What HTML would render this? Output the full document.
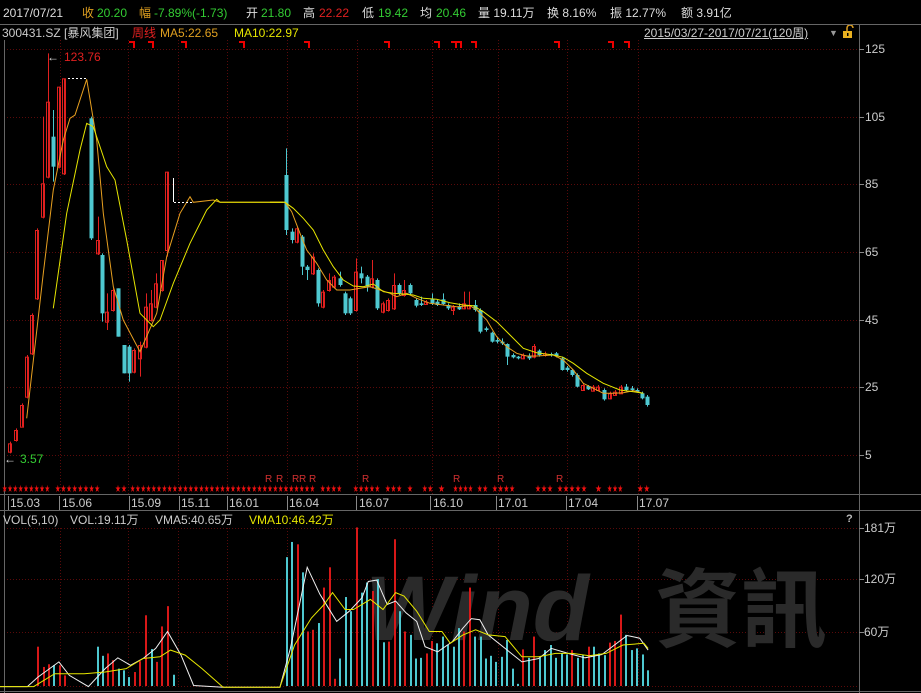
<!DOCTYPE html>
<html><head><meta charset="utf-8">
<style>
html,body{margin:0;padding:0;background:#000;}
body{width:921px;height:693px;overflow:hidden;position:relative;font-family:"Liberation Sans","Noto Sans CJK SC",sans-serif;font-size:12px;}
.t{position:absolute;white-space:nowrap;line-height:14px;}
</style></head><body>
<svg id="s" width="921" height="693" style="position:absolute;left:0;top:0" xmlns="http://www.w3.org/2000/svg">
<g stroke="#5a0a0a" stroke-dasharray="1,2" stroke-width="1">
<line x1="4" y1="49.5" x2="858" y2="49.5"/><line x1="4" y1="117.5" x2="858" y2="117.5"/><line x1="4" y1="184.5" x2="858" y2="184.5"/><line x1="4" y1="252.5" x2="858" y2="252.5"/><line x1="4" y1="320.5" x2="858" y2="320.5"/><line x1="4" y1="387.5" x2="858" y2="387.5"/><line x1="4" y1="455.5" x2="858" y2="455.5"/>
<line x1="60.5" y1="40" x2="60.5" y2="494"/><line x1="128.5" y1="40" x2="128.5" y2="494"/><line x1="178.5" y1="40" x2="178.5" y2="494"/><line x1="227.5" y1="40" x2="227.5" y2="494"/><line x1="287.5" y1="40" x2="287.5" y2="494"/><line x1="357.5" y1="40" x2="357.5" y2="494"/><line x1="432.5" y1="40" x2="432.5" y2="494"/><line x1="498.5" y1="40" x2="498.5" y2="494"/><line x1="567.5" y1="40" x2="567.5" y2="494"/><line x1="638.5" y1="40" x2="638.5" y2="494"/>
<line x1="4" y1="528.5" x2="858" y2="528.5"/><line x1="4" y1="579.5" x2="858" y2="579.5"/><line x1="4" y1="632.5" x2="858" y2="632.5"/>
<line x1="60.5" y1="528" x2="60.5" y2="686"/><line x1="128.5" y1="528" x2="128.5" y2="686"/><line x1="178.5" y1="528" x2="178.5" y2="686"/><line x1="227.5" y1="528" x2="227.5" y2="686"/><line x1="287.5" y1="528" x2="287.5" y2="686"/><line x1="357.5" y1="528" x2="357.5" y2="686"/><line x1="432.5" y1="528" x2="432.5" y2="686"/><line x1="498.5" y1="528" x2="498.5" y2="686"/><line x1="567.5" y1="528" x2="567.5" y2="686"/><line x1="638.5" y1="528" x2="638.5" y2="686"/>
<line x1="4" y1="686.5" x2="858" y2="686.5"/>
</g>
<g stroke="#666" stroke-width="1" fill="none">
<line x1="0" y1="24.5" x2="921" y2="24.5"/>
<line x1="859.5" y1="24" x2="859.5" y2="693"/>
<line x1="4.5" y1="40" x2="4.5" y2="693"/>
<line x1="0" y1="494.5" x2="921" y2="494.5"/>
<line x1="0" y1="510.5" x2="921" y2="510.5"/>
<line x1="0" y1="691.5" x2="921" y2="691.5"/>
</g>
<g stroke="#888" stroke-width="1">
<line x1="8.5" y1="496" x2="8.5" y2="510"/><line x1="59.5" y1="496" x2="59.5" y2="510"/><line x1="129.5" y1="496" x2="129.5" y2="510"/><line x1="179.5" y1="496" x2="179.5" y2="510"/><line x1="227.5" y1="496" x2="227.5" y2="510"/><line x1="287.5" y1="496" x2="287.5" y2="510"/><line x1="356.5" y1="496" x2="356.5" y2="510"/><line x1="430.5" y1="496" x2="430.5" y2="510"/><line x1="496.5" y1="496" x2="496.5" y2="510"/><line x1="566.5" y1="496" x2="566.5" y2="510"/><line x1="637.5" y1="496" x2="637.5" y2="510"/>
<line x1="859" y1="49.5" x2="864" y2="49.5"/><line x1="859" y1="117.5" x2="864" y2="117.5"/><line x1="859" y1="184.5" x2="864" y2="184.5"/><line x1="859" y1="252.5" x2="864" y2="252.5"/><line x1="859" y1="320.5" x2="864" y2="320.5"/><line x1="859" y1="387.5" x2="864" y2="387.5"/><line x1="859" y1="455.5" x2="864" y2="455.5"/>
<line x1="859" y1="528.5" x2="864" y2="528.5"/><line x1="859" y1="579.5" x2="864" y2="579.5"/><line x1="859" y1="632.5" x2="864" y2="632.5"/>
</g>
<g font-family="Liberation Sans, Noto Sans CJK SC, sans-serif" font-weight="bold" fill="#2a2a2a">
<text x="365" y="640" font-size="92" font-style="italic">Wind</text>
<text x="655" y="640" font-size="86">資訊</text>
</g>
<g id="red-marks" stroke="#e00" stroke-width="2" fill="none"></g>
<g id="vol"></g>
<g id="cdl"></g>
<g id="ma" fill="none" stroke-width="1"></g>
<g stroke="#fff" stroke-width="1" fill="none">
<line x1="173.5" y1="178" x2="173.5" y2="202"/>
<line x1="174" y1="202.5" x2="193" y2="202.5" stroke-dasharray="2,2"/>
<line x1="68" y1="78.5" x2="87" y2="78.5" stroke-dasharray="2,2"/>
</g>
<g id="stars" fill="#f01010" font-family="DejaVu Sans, sans-serif" font-size="10"></g>
<g fill="#d03030" font-family="Liberation Sans, sans-serif" font-size="10">
<text x="265" y="482">R</text><text x="276" y="482">R</text><text x="292" y="482">R</text><text x="299" y="482">R</text><text x="309" y="482">R</text><text x="362" y="482">R</text><text x="453" y="482">R</text><text x="497" y="482">R</text><text x="556" y="482">R</text>
</g>
</svg>

<div class="t" style="left:3px;top:6px;color:#ddd">2017/07/21</div>
<div class="t" style="left:82px;top:6px;color:#e0a020">收</div><div class="t" style="left:97px;top:6px;color:#3c3">20.20</div>
<div class="t" style="left:139px;top:6px;color:#e0a020">幅</div><div class="t" style="left:154px;top:6px;color:#3c3">-7.89%(-1.73)</div>
<div class="t" style="left:246px;top:6px;color:#ddd">开</div><div class="t" style="left:261px;top:6px;color:#3c3">21.80</div>
<div class="t" style="left:303px;top:6px;color:#ddd">高</div><div class="t" style="left:319px;top:6px;color:#e02020">22.22</div>
<div class="t" style="left:362px;top:6px;color:#ddd">低</div><div class="t" style="left:378px;top:6px;color:#3c3">19.42</div>
<div class="t" style="left:420px;top:6px;color:#ddd">均</div><div class="t" style="left:436px;top:6px;color:#3c3">20.46</div>
<div class="t" style="left:478px;top:6px;color:#ddd">量 19.11万</div>
<div class="t" style="left:547px;top:6px;color:#ddd">换 8.16%</div>
<div class="t" style="left:610px;top:6px;color:#ddd">振 12.77%</div>
<div class="t" style="left:681px;top:6px;color:#ddd">额 3.91亿</div>

<div class="t" style="left:2px;top:26px;color:#ccc">300431.SZ [暴风集团]</div>
<div class="t" style="left:132px;top:26px;color:#e02020">周线</div>
<div class="t" style="left:160px;top:26px;color:#e0a020">MA5:22.65</div>
<div class="t" style="left:234px;top:26px;color:#e6e600">MA10:22.97</div>
<div class="t" style="left:644px;top:26px;color:#ccc;text-decoration:underline">2015/03/27-2017/07/21(120周)</div>
<div class="t" style="left:829px;top:26px;color:#999;font-size:9px">▼</div>
<svg style="position:absolute;left:842px;top:25px" width="14" height="14"><path d="M5 6 V3 a3 3 0 0 1 6 0" stroke="#e0a020" stroke-width="1.5" fill="none"/><rect x="1" y="6" width="9" height="7" fill="#e8b020"/><rect x="5" y="8" width="1.5" height="3" fill="#000"/></svg>

<div class="t" style="left:47px;top:50px;color:#ddd">←</div><div class="t" style="left:64px;top:50px;color:#e02020">123.76</div>
<div class="t" style="left:4px;top:452px;color:#ddd">←</div><div class="t" style="left:20px;top:452px;color:#3c3">3.57</div>

<div class="t" style="left:865px;top:42px;color:#ccc">125</div>
<div class="t" style="left:865px;top:110px;color:#ccc">105</div>
<div class="t" style="left:865px;top:177px;color:#ccc">85</div>
<div class="t" style="left:865px;top:245px;color:#ccc">65</div>
<div class="t" style="left:865px;top:313px;color:#ccc">45</div>
<div class="t" style="left:865px;top:380px;color:#ccc">25</div>
<div class="t" style="left:865px;top:448px;color:#ccc">5</div>

<div class="t" style="left:10px;top:496px;color:#ccc">15.03</div>
<div class="t" style="left:62px;top:496px;color:#ccc">15.06</div>
<div class="t" style="left:131px;top:496px;color:#ccc">15.09</div>
<div class="t" style="left:181px;top:496px;color:#ccc">15.11</div>
<div class="t" style="left:229px;top:496px;color:#ccc">16.01</div>
<div class="t" style="left:289px;top:496px;color:#ccc">16.04</div>
<div class="t" style="left:359px;top:496px;color:#ccc">16.07</div>
<div class="t" style="left:433px;top:496px;color:#ccc">16.10</div>
<div class="t" style="left:498px;top:496px;color:#ccc">17.01</div>
<div class="t" style="left:568px;top:496px;color:#ccc">17.04</div>
<div class="t" style="left:639px;top:496px;color:#ccc">17.07</div>

<div class="t" style="left:3px;top:513px;color:#ccc">VOL(5,10)</div>
<div class="t" style="left:70px;top:513px;color:#ccc">VOL:19.11万</div>
<div class="t" style="left:155px;top:513px;color:#ccc">VMA5:40.65万</div>
<div class="t" style="left:249px;top:513px;color:#e6e600">VMA10:46.42万</div>
<div class="t" style="left:846px;top:512px;color:#bbb;font-weight:bold;font-size:11px">?</div>
<div class="t" style="left:864px;top:521px;color:#ccc">181万</div>
<div class="t" style="left:864px;top:572px;color:#ccc">120万</div>
<div class="t" style="left:864px;top:625px;color:#ccc">60万</div>

<script>
var NS="http://www.w3.org/2000/svg";
function el(p,t,a){var e=document.createElementNS(NS,t);for(var k in a)e.setAttribute(k,a[k]);p.appendChild(e);return e;}
var R="#e0201f",C="#4ec8d0";
var cd=document.getElementById("cdl");
function candle(x,bt,bb,wt,wb,c){var col=c=="r"?R:C;
 el(cd,"line",{x1:x+0.5,x2:x+0.5,y1:wt,y2:wb,stroke:col,"stroke-width":1});
 var h=Math.max(1,bb-bt);
 if(c=="r"){el(cd,"rect",{x:x-1.5,y:bt+0.5,width:3,height:h,fill:"none",stroke:col,"stroke-width":1});}
 else el(cd,"rect",{x:x-1.5,y:bt,width:4,height:h,fill:col});}
var A=[[30,1210,1235,1205,1240,"r"],[48,1170,1200,1165,1205,"r"],[65,1095,1160,1090,1160,"r"],[80,950,1070,945,1075,"r"],[97,825,940,820,945,"r"],[112,570,775,565,780,"r"],[130,430,530,230,535,"r"],[145,185,410,40,415,"r"],[160,290,380,210,425,"c"],[178,140,380,140,385,"r"],[193,115,400,115,405,"r"],[273,235,595,230,600,"c"],[293,600,640,530,645,"r"],[307,645,820,640,845,"c"],[322,815,845,760,870,"r"],[340,750,810,745,815,"r"],[355,745,890,745,890,"c"],[373,915,1000,915,1000,"c"],[388,920,1000,915,1025,"c"],[403,930,995,925,1000,"r"],[420,915,955,905,1010,"r"],[437,800,920,760,925,"r"],[452,790,840,750,845,"r"],[468,730,800,700,805,"r"],[485,660,750,660,755,"r"],[502,395,630,395,650,"r"]];
A.forEach(function(d){candle(Math.round(d[0]/3),40+d[1]/3,40+d[2]/3,40+d[3]/3,40+d[4]/3,d[5]);});
var B=[[48,105,270,25,285,"c"],[65,275,300,265,310,"c"],[80,265,305,260,310,"r"],[97,290,380,285,405,"c"],[112,380,390,375,420,"c"],[130,350,400,340,405,"r"],[145,390,490,385,500,"c"],[160,455,500,450,505,"r"],[178,420,450,400,455,"r"],[193,410,440,405,445,"r"],[210,415,435,395,440,"c"],[225,460,520,455,525,"c"],[240,475,520,470,525,"c"],[258,395,510,355,515,"r"],[273,400,415,380,430,"c"],[290,410,440,405,455,"c"],[307,415,440,360,445,"r"],[322,420,505,415,510,"c"],[340,490,515,485,520,"r"],[355,480,510,475,515,"r"],[373,435,505,400,510,"r"],[388,435,460,430,465,"c"],[403,450,465,420,470,"r"],[420,435,460,430,465,"c"],[437,480,497,475,502,"c"],[452,490,495,470,498,"c"],[468,485,492,480,495,"r"],[485,478,490,460,495,"c"],[502,485,495,480,498,"c"],[518,478,492,460,495,"c"],[535,495,505,490,510,"c"],[550,500,510,495,525,"r"],[567,500,508,490,510,"c"],[583,490,505,455,508,"r"],[598,495,505,455,508,"r"],[615,495,510,480,515,"c"],[630,510,575,505,580,"c"],[647,565,570,560,575,"c"],[665,578,605,575,608,"c"],[680,600,605,590,610,"c"],[697,605,610,595,615,"c"],[712,612,650,610,675,"c"],[728,645,652,640,655,"c"],[745,650,655,648,658,"c"],[760,645,655,640,658,"r"],[778,648,655,640,660,"c"],[793,618,650,612,655,"r"],[808,632,645,628,650,"c"],[825,640,645,635,650,"r"],[842,642,645,638,650,"c"],[858,640,648,636,652,"c"],[875,655,690,650,692,"c"],[890,683,690,678,695,"c"],[905,690,705,688,710,"c"],[922,705,740,700,742,"c"],[940,735,750,730,752,"r"],[955,738,748,735,750,"c"],[970,740,752,735,755,"r"],[985,740,750,735,752,"r"],[1003,750,778,745,782,"c"],[1020,760,775,755,778,"r"],[1035,755,765,750,768,"r"],[1053,740,760,735,762,"r"],[1068,740,750,732,752,"c"],[1085,745,750,738,752,"c"],[1100,750,755,745,758,"c"],[1115,760,775,755,778,"c"],[1130,770,795,765,800,"c"]];
B.forEach(function(d){candle(Math.round(270+d[0]/3),140+d[1]/3,140+d[2]/3,140+d[3]/3,140+d[4]/3,d[5]);});
var ma=document.getElementById("ma");
function pl(pts,fx,fy,col){var s=[];for(var i=0;i<pts.length;i+=2)s.push(fx(pts[i])+","+fy(pts[i+1]));el(ma,"polyline",{points:s.join(" "),stroke:col,fill:"none","stroke-width":1});}
var a5=[80,1135,130,700,160,450,190,300,210,235,225,225,260,118,290,300,310,520,340,740,370,840,420,935,470,820,500,650,540,520,570,470,580,487,640,480,660,487,850,487];
var a10=[160,805,200,520,240,330,260,250,280,260,320,380,345,420,380,600,420,820,460,860,480,840,520,730,570,610,620,510,650,478,660,487,850,487];
var b5=[0,187,45,187,65,215,90,280,110,330,140,370,170,420,200,450,240,450,270,445,300,440,330,450,360,460,380,470,410,460,440,475,480,490,520,495,560,500,600,497,620,510,650,540,680,590,710,620,740,640,770,648,800,648,850,645,880,660,910,690,940,730,970,745,1000,760,1030,760,1060,758,1090,752,1120,760];
var b10=[0,187,45,187,70,205,100,235,130,270,160,330,190,380,220,420,250,438,280,440,310,432,340,455,370,460,400,462,430,465,460,475,500,478,540,488,580,495,610,497,640,515,680,545,720,585,760,625,800,638,850,645,880,652,910,670,950,700,1000,730,1050,750,1090,755,1120,760];
var fa=function(v){return (v/3).toFixed(1)},fay=function(v){return (40+v/3).toFixed(1)};
var fb=function(v){return (270+v/3).toFixed(1)},fby=function(v){return (140+v/3).toFixed(1)};
pl(a5,fa,fay,"#e8a020");pl(a10,fa,fay,"#e6e600");pl(b5,fb,fby,"#e8a020");pl(b10,fb,fby,"#e6e600");
var vg=document.getElementById("vol");
var V=[[88,375,"r"],[103,435,"r"],[115,427,"r"],[127,430,"c"],[140,430,"r"],[153,460,"r"],[230,375,"c"],[243,402,"c"],[255,395,"r"],[267,415,"r"],[280,440,"c"],[293,445,"c"],[305,465,"c"],[318,450,"r"],[330,418,"r"],[345,282,"r"],[358,382,"c"],[370,420,"r"],[382,315,"r"],[396,255,"r"],[410,458,"c"],[680,110,"c"],[692,65,"c"],[705,72,"r"],[718,155,"c"],[730,330,"r"],[742,325,"r"],[755,305,"c"],[768,200,"r"],[781,140,"r"],[793,470,"r"],[806,410,"c"],[819,228,"c"],[832,270,"c"],[845,22,"r"],[858,215,"c"],[870,185,"c"],[883,210,"r"],[896,175,"c"],[909,362,"c"],[922,360,"r"],[936,57,"r"],[948,270,"c"],[960,330,"r"],[973,340,"c"],[986,410,"c"],[999,408,"c"],[1012,395,"r"],[1024,358,"r"],[1037,365,"c"],[1050,345,"c"],[1063,370,"c"],[1076,375,"c"],[1089,320,"c"],[1101,330,"r"],[1114,200,"r"],[1127,345,"c"],[1140,345,"c"],[1152,410,"c"],[1164,402,"c"],[1177,420,"c"],[1190,405,"c"],[1203,355,"c"],[1216,440,"c"],[1229,485,"c"],[1241,383,"r"],[1254,408,"c"],[1267,345,"r"],[1280,408,"c"],[1293,385,"c"],[1306,370,"c"],[1319,408,"c"],[1332,395,"c"],[1345,398,"c"],[1357,385,"r"],[1370,408,"c"],[1383,400,"c"],[1396,375,"r"],[1408,375,"c"],[1421,395,"c"],[1434,400,"c"],[1447,363,"r"],[1460,358,"r"],[1473,280,"r"],[1486,340,"c"],[1499,385,"c"],[1512,380,"c"],[1525,398,"c"],[1538,445,"c"]];
var vx=function(v){return v/2.376},vy=function(v){return 520+v/2.96};
V.forEach(function(d){var x=Math.round(vx(d[0]));var y=vy(d[1]);el(vg,"rect",{x:x,y:y,width:2,height:686-y,fill:d[2]=="r"?"#d81818":"#4ec8d0"});});
var w=[0,493,65,493,90,465,140,420,165,460,210,493,250,440,280,408,310,430,340,410,370,380,398,330,430,400,460,490,530,495,665,495,690,380,730,140,760,220,780,260,800,300,830,270,860,230,875,182,895,178,920,250,940,240,965,275,990,300,1010,375,1040,390,1075,360,1100,320,1120,292,1140,295,1160,340,1200,380,1240,420,1280,410,1310,380,1350,395,1390,408,1430,398,1460,370,1490,342,1520,350,1540,385];
var yv=[0,493,80,493,130,455,200,455,250,450,300,440,340,410,380,405,405,385,440,400,480,440,530,495,665,495,700,370,740,290,770,250,790,215,820,265,840,265,880,235,910,265,940,215,960,225,990,270,1020,330,1050,330,1070,365,1100,340,1130,325,1160,340,1200,345,1240,405,1280,405,1320,395,1360,395,1400,402,1440,395,1480,370,1530,365,1540,380];
var f1=function(v){return vx(v).toFixed(1)},f2=function(v){return vy(v).toFixed(1)};
pl(w,f1,f2,"#f0f0f0");pl(yv,f1,f2,"#e6e600");
var sg=document.getElementById("stars");
[[2,50,9],[55,100,8],[115,127,2],[130,315,35],[320,342,4],[353,380,5],[385,402,3],[407,413,1],[422,433,2],[438,445,1],[453,473,4],[477,488,2],[492,515,4],[535,553,3],[557,587,5],[595,602,1],[607,623,3],[637,650,2]].forEach(function(g){
 var t=el(sg,"text",{x:g[0],y:492,textLength:g[1]-g[0],lengthAdjust:"spacingAndGlyphs"});t.textContent=Array(g[2]+1).join("★");});
var rm=document.getElementById("red-marks");
[133,152,185,243,308,388,438,455,460,475,558,612,628].forEach(function(x){el(rm,"polyline",{points:(x-4)+",42 "+(x+1)+",42 "+(x+1)+",48"});});
</script>
</body></html>
